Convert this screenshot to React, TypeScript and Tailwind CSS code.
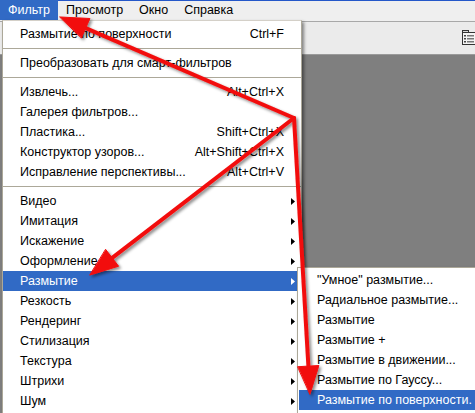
import React from "react";

type Row =
  | { kind: "sep"; h: string }
  | { kind: "item"; text: string; key?: string; sub?: boolean; active?: boolean };

const filterMenu: Row[] = [
  { kind: "item", text: "Размытие по поверхности", key: "Ctrl+F" },
  { kind: "sep", h: "h-[9px]" },
  { kind: "item", text: "Преобразовать для смарт-фильтров" },
  { kind: "sep", h: "h-[9px]" },
  { kind: "item", text: "Извлечь...", key: "Alt+Ctrl+X" },
  { kind: "item", text: "Галерея фильтров..." },
  { kind: "item", text: "Пластика...", key: "Shift+Ctrl+X" },
  { kind: "item", text: "Конструктор узоров...", key: "Alt+Shift+Ctrl+X" },
  { kind: "item", text: "Исправление перспективы...", key: "Alt+Ctrl+V" },
  { kind: "sep", h: "h-[9px]" },
  { kind: "item", text: "Видео", sub: true },
  { kind: "item", text: "Имитация", sub: true },
  { kind: "item", text: "Искажение", sub: true },
  { kind: "item", text: "Оформление", sub: true },
  { kind: "item", text: "Размытие", sub: true, active: true },
  { kind: "item", text: "Резкость", sub: true },
  { kind: "item", text: "Рендеринг", sub: true },
  { kind: "item", text: "Стилизация", sub: true },
  { kind: "item", text: "Текстура", sub: true },
  { kind: "item", text: "Штрихи", sub: true },
  { kind: "item", text: "Шум", sub: true },
];

const blurMenu = [
  '"Умное" размытие...',
  "Радиальное размытие...",
  "Размытие",
  "Размытие +",
  "Размытие в движении...",
  "Размытие по Гауссу...",
  "Размытие по поверхности.",
];

function SubArrow({ white }: { white?: boolean }) {
  return (
    <svg width="4" height="7" viewBox="0 0 4 7" className="shrink-0">
      <polygon points="0,0 4,3.5 0,7" fill={white ? "#ffffff" : "#000000"} />
    </svg>
  );
}

function PanelIcon() {
  return (
    <svg width="14" height="15" viewBox="0 0 14 15">
      <rect x="0.5" y="0.5" width="6" height="3" fill="#d8d8d8" stroke="#333" />
      <rect x="0.5" y="2.5" width="13" height="12" fill="#f4f4f4" stroke="#333" />
      <rect x="2" y="5" width="2" height="1.5" fill="#444" />
      <rect x="5" y="5" width="7" height="1.5" fill="#777" />
      <rect x="2" y="8" width="2" height="1.5" fill="#444" />
      <rect x="5" y="8" width="7" height="1.5" fill="#777" />
      <rect x="2" y="11" width="2" height="1.5" fill="#444" />
      <rect x="5" y="11" width="7" height="1.5" fill="#777" />
    </svg>
  );
}

// Red callout arrows drawn over the menus
function Callouts() {
  const j = "294,118";
  return (
    <svg
      className="absolute inset-0 pointer-events-none"
      width="475"
      height="413"
      viewBox="0 0 475 413"
    >
      <defs>
        <filter id="shade" x="-20%" y="-20%" width="140%" height="140%">
          <feDropShadow dx="2" dy="2" stdDeviation="1.4" floodColor="#000" floodOpacity="0.45" />
        </filter>
      </defs>
      <g filter="url(#shade)" fill="#f20d0d" stroke="#f20d0d" strokeWidth="4" strokeLinecap="round">
        <polyline points={`${j} 85.7,28.1`} fill="none" />
        <polyline points={`${j} 112.2,257.9`} fill="none" />
        <polyline points={`${j} 308.4,366.1`} fill="none" />
        <polygon points="60,17 89.9,18.5 81.5,37.7" strokeWidth="1" strokeLinejoin="miter" />
        <polygon points="90,275 118.6,266.2 105.8,249.6" strokeWidth="1" strokeLinejoin="miter" />
        <polygon points="310,394 318.9,365.5 297.9,366.7" strokeWidth="1" strokeLinejoin="miter" />
      </g>
    </svg>
  );
}

export default function App() {
  return (
    <div className="relative w-[475px] h-[413px] overflow-hidden bg-[#ececec] font-['Liberation_Sans',Arial,sans-serif] text-[12.5px] leading-[20px] text-black">
      {/* menu bar */}
      <div className="flex h-[21px] bg-[#efefef] shadow-[inset_0_1px_0_#2457c9]">
        <div className="h-[20px] px-[8px] bg-[#316ac5] text-white">Фильтр</div>
        <div className="h-[20px] px-[8px]">Просмотр</div>
        <div className="h-[20px] px-[8px]">Окно</div>
        <div className="h-[20px] px-[8px]">Справка</div>
      </div>

      {/* options bar */}
      <div className="h-[1px] bg-[#a8a8a8]" />
      <div className="flex h-[33px] items-center justify-end bg-[#ebebeb] border-b border-[#9a9a9a]">
        <div className="mr-[-1px] mt-[-1px]">
          <PanelIcon />
        </div>
      </div>

      {/* document area */}
      <div className="h-[400px] bg-[#7f7f7f]" />

      {/* Filter menu */}
      <div className="absolute left-[2px] top-[20px] w-[300px] h-[400px] bg-white border-x border-t border-x-[#aca899] border-t-[#d4d0c8] pt-[3px] shadow-[2px_2px_3px_rgba(0,0,0,0.45)]">
        {filterMenu.map((r, i) =>
          r.kind === "sep" ? (
            <div key={i} className={`${r.h} flex items-center`}>
              <div className="h-[1px] w-full bg-[#aca899]" />
            </div>
          ) : (
            <div
              key={i}
              className={`flex h-[20px] items-center justify-between pl-[17px] ${
                r.sub ? "pr-[6px]" : "pr-[17px]"
              } ${r.active ? "bg-[#316ac5] text-white" : ""}`}
            >
              <span className="whitespace-nowrap">{r.text}</span>
              {r.key && <span className="whitespace-nowrap">{r.key}</span>}
              {r.sub && <SubArrow white={r.active} />}
            </div>
          )
        )}
      </div>

      {/* Blur submenu */}
      <div className="absolute left-[297px] top-[267px] w-[200px] h-[160px] bg-white border border-[#aca899] pt-[2px] pl-[1px] shadow-[2px_2px_3px_rgba(0,0,0,0.45)]">
        {blurMenu.map((t, i) => (
          <div
            key={i}
            className={`h-[20px] pl-[18px] whitespace-nowrap ${
              i === blurMenu.length - 1 ? "bg-[#316ac5] text-white" : ""
            }`}
          >
            {t}
          </div>
        ))}
      </div>

      <Callouts />
    </div>
  );
}
